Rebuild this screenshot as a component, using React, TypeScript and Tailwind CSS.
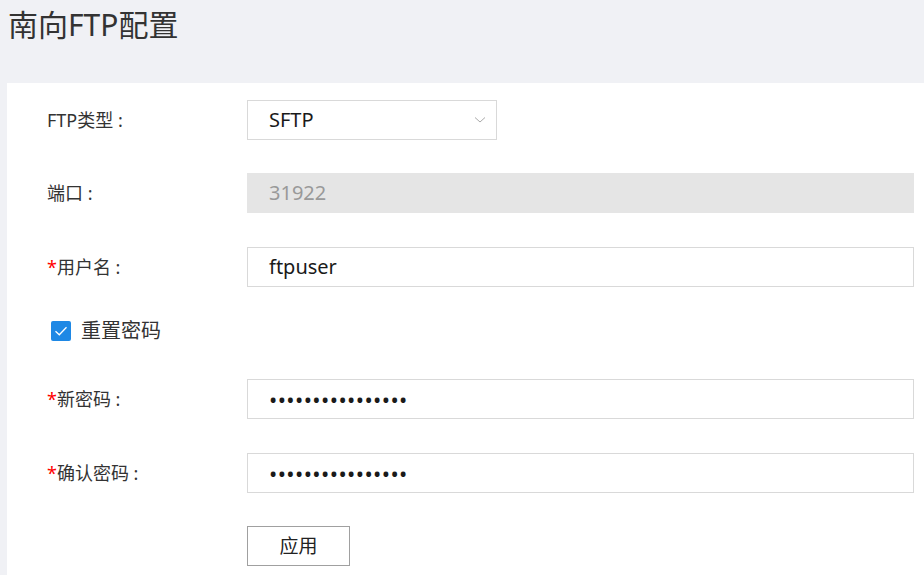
const font = { fontFamily: '"Noto Sans", "Noto Sans CJK SC", sans-serif' }

function Label({ text, required }: { text: string; required?: boolean }) {
  return (
    <div className="w-[240px] shrink-0 pl-[40px] text-[18px] text-[#333]">
      {required && <span className="text-[#f00]">*</span>}
      {text} :
    </div>
  )
}

function Field({ children, className }: { children: React.ReactNode; className?: string }) {
  return (
    <div
      className={
        'flex h-[40px] items-center border border-[#d9d9d9] pl-[21px] text-[20px] text-[#1a1a1a] ' +
        (className ?? '')
      }
    >
      {children}
    </div>
  )
}

export default function App() {
  const dots = '••••••••••••••••'
  return (
    <div className="min-h-[575px] w-[924px] bg-[#f0f1f5]" style={font}>
      <h1 className="pl-[8px] pt-[3px] text-[30px] leading-[44px] text-[#333]">南向FTP配置</h1>

      <div className="ml-[7px] mt-[36px] min-h-[492px] bg-white pr-[10px] pt-[17px]">
        {/* FTP type */}
        <div className="flex items-center">
          <Label text="FTP类型" />
          <Field className="w-[250px] justify-between pr-[10px]">
            <span>SFTP</span>
            <svg width="12" height="8" viewBox="0 0 12 8" fill="none" stroke="#aaa" strokeWidth="1">
              <path d="M1 1.5 L6 6 L11 1.5" />
            </svg>
          </Field>
        </div>

        {/* port */}
        <div className="mt-[33px] flex items-center">
          <Label text="端口" />
          <Field className="flex-1 border-[#e5e5e5] bg-[#e5e5e5] text-[#999]">31922</Field>
        </div>

        {/* username */}
        <div className="mt-[34px] flex items-center">
          <Label text="用户名" required />
          <Field className="flex-1">ftpuser</Field>
        </div>

        {/* reset password */}
        <div className="mt-[34px] flex h-[20px] items-center pl-[44px]">
          <div className="flex h-[20px] w-[20px] items-center justify-center rounded-[2px] bg-[#1e88e5]">
            <svg width="16" height="16" viewBox="0 0 16 16" fill="none" stroke="white" strokeWidth="1.3">
              <path d="M2.5 8.2 L6.3 11.8 L13.5 4.2" />
            </svg>
          </div>
          <span className="ml-[10px] text-[20px] text-[#333]">重置密码</span>
        </div>

        {/* new password */}
        <div className="mt-[38px] flex items-center">
          <Label text="新密码" required />
          <Field className="flex-1 text-[22px] tracking-[0.4px]">{dots}</Field>
        </div>

        {/* confirm */}
        <div className="mt-[34px] flex items-center">
          <Label text="确认密码" required />
          <Field className="flex-1 text-[22px] tracking-[0.4px]">{dots}</Field>
        </div>

        {/* apply */}
        <div className="mt-[33px] pl-[240px]">
          <button className="h-[40px] w-[103px] border border-[#a0a0a0] bg-white text-[19px] text-[#222]">
            应用
          </button>
        </div>
      </div>
    </div>
  )
}
